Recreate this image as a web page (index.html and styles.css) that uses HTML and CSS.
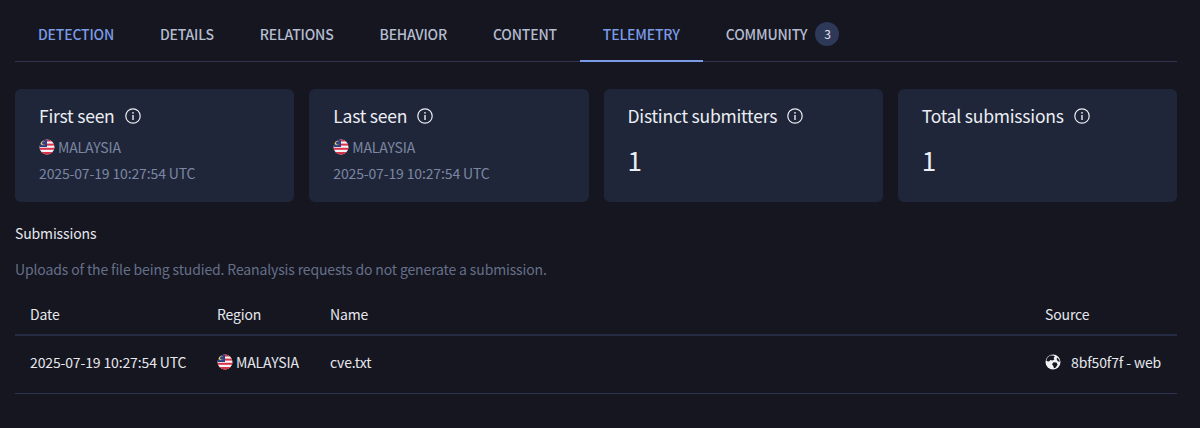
FILE: index.html
```html
<!DOCTYPE html>
<html lang="en">
<head>
    <meta charset="UTF-8">
    <title>Telemetry</title>
    <link rel="stylesheet" href="styles.css">
</head>
<body>
    <svg class="defs" width="0" height="0">
        <defs>
            <clipPath id="flag-clip"><circle cx="8" cy="8" r="7.5"/></clipPath>
            <symbol id="flag" viewBox="0 0 16 16">
                <g clip-path="url(#flag-clip)">
                    <rect width="16" height="16" fill="#f4f4f6"/>
                    <rect y="0.5" width="16" height="2" fill="#d8324a"/>
                    <rect y="4.6" width="16" height="2" fill="#d8324a"/>
                    <rect y="8.8" width="16" height="2" fill="#d8324a"/>
                    <rect y="13" width="16" height="3" fill="#d8324a"/>
                    <rect width="8" height="8" fill="#2c3f86"/>
                    <circle cx="4" cy="4" r="2.2" fill="#f2d24b"/>
                    <circle cx="4.8" cy="4" r="1.8" fill="#2c3f86"/>
                </g>
            </symbol>
            <symbol id="info" viewBox="0 0 16 16">
                <circle cx="8" cy="8" r="7.2" fill="none" stroke="currentColor" stroke-width="1.2"/>
                <circle cx="8" cy="4.8" r="0.9" fill="currentColor"/>
                <rect x="7.3" y="7" width="1.4" height="5" fill="currentColor"/>
            </symbol>
        </defs>
    </svg>

    <nav class="tabs">
        <a class="tab blue">DETECTION</a>
        <a class="tab">DETAILS</a>
        <a class="tab">RELATIONS</a>
        <a class="tab">BEHAVIOR</a>
        <a class="tab">CONTENT</a>
        <a class="tab blue active">TELEMETRY</a>
        <a class="tab">COMMUNITY <span class="count">3</span></a>
    </nav>

    <div class="cards">
        <div class="card">
            <div class="card-title">First seen <svg class="info"><use href="#info"/></svg></div>
            <div class="card-meta"><svg class="flag"><use href="#flag"/></svg>MALAYSIA</div>
            <div class="card-meta date">2025-07-19 10:27:54 UTC</div>
        </div>
        <div class="card">
            <div class="card-title">Last seen <svg class="info"><use href="#info"/></svg></div>
            <div class="card-meta"><svg class="flag"><use href="#flag"/></svg>MALAYSIA</div>
            <div class="card-meta date">2025-07-19 10:27:54 UTC</div>
        </div>
        <div class="card">
            <div class="card-title">Distinct submitters <svg class="info"><use href="#info"/></svg></div>
            <div class="card-value">1</div>
        </div>
        <div class="card">
            <div class="card-title">Total submissions <svg class="info"><use href="#info"/></svg></div>
            <div class="card-value">1</div>
        </div>
    </div>

    <h2 class="section-title">Submissions</h2>
    <p class="section-note">Uploads of the file being studied. Reanalysis requests do not generate a submission.</p>

    <div class="table">
        <div class="row head">
            <div>Date</div>
            <div>Region</div>
            <div>Name</div>
            <div>Source</div>
        </div>
        <div class="row body-row">
            <div>2025-07-19 10:27:54 UTC</div>
            <div class="region"><svg class="flag"><use href="#flag"/></svg>MALAYSIA</div>
            <div>cve.txt</div>
            <div class="source">
                <svg class="globe" viewBox="0 0 16 16">
                    <circle cx="8" cy="8" r="7.5" fill="#f1f2f5"/>
                    <path d="M5.2 1.6 C6.8 1.2 9 1.4 9.8 2.4 L8.6 4 L9.4 5.4 L7.4 6.4 L5.4 6 L4 7.6 L1.4 7 C1.6 4.8 3 2.6 5.2 1.6 Z" fill="#15161f"/>
                    <path d="M8.6 8.2 L11.4 8.6 L12.6 10.4 L10.8 13.4 L9 14.2 L8.2 11.8 L7 10.2 Z" fill="#15161f"/>
                    <path d="M12.2 3.4 L14.4 6 L14.6 8 L12.6 7 L11.6 5 Z" fill="#15161f"/>
                </svg>
                <span>8bf50f7f - web</span>
            </div>
        </div>
    </div>
</body>
</html>
```

FILE: styles.css
```css
body {
    margin: 0;
    padding: 0 23px 0 15px;
    background-color: #15161f;
    color: #f0f1f5;
    font-family: "Noto Sans CJK JP", "Noto Sans", sans-serif;
    font-size: 14px;
    letter-spacing: -0.14px;
    overflow: hidden;
}
.defs {
    position: absolute;
}
.tabs {
    display: flex;
    height: 62px;
    box-sizing: border-box;
    padding-top: 8px;
    border-bottom: 1px solid #2f3450;
}
.tab {
    display: flex;
    align-items: center;
    height: 52px;
    padding: 0 23px;
    font-size: 14px;
    font-weight: 500;
    letter-spacing: -0.185px;
    color: #b4bcd0;
}
.tab.blue {
    color: #7b9be6;
}
.tab.active {
    border-bottom: 2px solid #7b9be6;
    height: 54px;
    box-sizing: border-box;
}
.count {
    display: inline-block;
    width: 24px;
    height: 24px;
    line-height: 24px;
    margin-left: 8px;
    border-radius: 50%;
    background-color: #2e3858;
    text-align: center;
    font-size: 12px;
    font-weight: 400;
    color: #e4e7ef;
}
.cards {
    display: grid;
    grid-template-columns: repeat(4, 1fr);
    gap: 15px;
    margin-top: 27px;
}
.card {
    height: 113px;
    box-sizing: border-box;
    padding: 14px 24px;
    border-radius: 6px;
    background-color: #1f2639;
}
.card-title {
    display: flex;
    align-items: center;
    font-size: 17.5px;
    letter-spacing: -0.22px;
    line-height: 26px;
    font-weight: 400;
    color: #eceef3;
}
.info {
    width: 16px;
    height: 16px;
    margin-left: 10px;
}
.card-meta {
    display: flex;
    align-items: center;
    margin-top: 8px;
    line-height: 20px;
    color: #7c86a2;
}
.card-meta.date {
    margin-top: 6px;
}
.card-value {
    margin-top: 15px;
    font-size: 26px;
    line-height: 32px;
    color: #eceef3;
}
.flag {
    width: 16px;
    height: 16px;
    margin-right: 3px;
}
.section-title {
    margin: 21px 0 0;
    font-size: 14px;
    font-weight: 400;
    line-height: 20px;
    color: #e6e8ee;
}
.section-note {
    margin: 16px 0 0;
    line-height: 20px;
    color: #666f8a;
}
.table {
    margin-top: 15px;
}
.row {
    display: grid;
    grid-template-columns: 187px 113px 1fr 132px;
    align-items: center;
    height: 58px;
    box-sizing: border-box;
    padding-left: 15px;
    border-bottom: 1px solid #2f3450;
    color: #e6e8ee;
}
.row.head {
    height: 42px;
    border-bottom: 2px solid #272c45;
}
.row.body-row {
    padding-bottom: 6px;
}
.region,
.source {
    display: flex;
    align-items: center;
}
.globe {
    width: 16px;
    height: 16px;
    margin-right: 10px;
}
```
